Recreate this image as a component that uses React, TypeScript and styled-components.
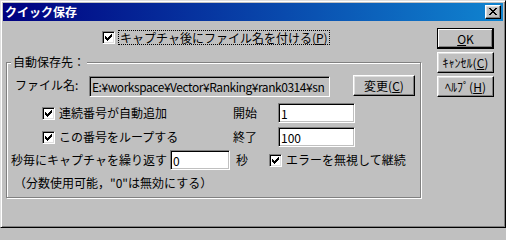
import React from 'react';
import styled, { createGlobalStyle, css } from 'styled-components';

const GlobalStyle = createGlobalStyle`
  html, body {
    margin: 0;
    padding: 0;
    background: #c0c0c0;
  }
  body {
    font-family: "Noto Sans CJK JP", "Noto Sans", sans-serif;
    font-size: 12px;
    color: #000;
  }
`;

const CheckMark = () => (
  <svg width="7" height="7" viewBox="0 0 7 7" shapeRendering="crispEdges">
    <path
      fill="#000"
      d="M6 0h1v1h-1z M5 1h2v1h-2z M0 2h1v1h-1z M4 2h3v1h-3z M0 3h2v1h-2z M3 3h3v1h-3z M0 4h5v1h-5z M1 5h3v1h-3z M2 6h1v1h-1z"
    />
  </svg>
);

const CloseGlyph = () => (
  <svg width="8" height="7" viewBox="0 0 8 7" shapeRendering="crispEdges">
    <path
      fill="#000"
      d="M0 0h2v1h-2z M6 0h2v1h-2z M1 1h2v1h-2z M5 1h2v1h-2z M2 2h4v1h-4z M3 3h2v1h-2z M2 4h4v1h-4z M1 5h2v1h-2z M5 5h2v1h-2z M0 6h2v1h-2z M6 6h2v1h-2z"
    />
  </svg>
);

const Check = ({ label }: { label: React.ReactNode }) => (
  <CheckCell>
    <CheckBox>
      <CheckMark />
    </CheckBox>
    <CheckText>{label}</CheckText>
  </CheckCell>
);

const App = () => {
  return (
    <>
      <GlobalStyle />
      <Window>
        <TitleBar>
          <Title>クイック保存</Title>
          <CloseButton aria-label="閉じる">
            <CloseGlyph />
          </CloseButton>
        </TitleBar>
        <Body>
          <LeftPane>
            <TopCheckRow>
              <CheckBox>
                <CheckMark />
              </CheckBox>
              <FocusLabel>
                キャプチャ後にファイル名を付ける(<u>P</u>)
              </FocusLabel>
            </TopCheckRow>

            <GroupBox>
              <GroupLegend>自動保存先：</GroupLegend>

              <FileRow>
                <RowLabel $indent={8} $width={74}>ファイル名:</RowLabel>
                <TextField
                  $width={241}
                  $height={21}
                  $readonly
                  readOnly
                  value="E:¥workspace¥Vector¥Ranking¥rank0314¥sn"
                />
                <Button $width={62} $gap={23}>
                  変更(<u>C</u>)
                </Button>
              </FileRow>

              <NumberRow $top={6}>
                <CheckColumn>
                  <Check label="連続番号が自動追加" />
                </CheckColumn>
                <RowLabel $width={45}>開始</RowLabel>
                <TextField $width={77} readOnly value="1" />
              </NumberRow>

              <NumberRow $top={4}>
                <CheckColumn>
                  <Check label="この番号をループする" />
                </CheckColumn>
                <RowLabel $width={45}>終了</RowLabel>
                <TextField $width={77} readOnly value="100" />
              </NumberRow>

              <NumberRow $top={3}>
                <RowLabel $indent={4} $width={159}>
                  秒毎にキャプチャを繰り返す
                </RowLabel>
                <TextField $width={60} readOnly value="0" />
                <RowLabel $indent={6} $width={33}>
                  秒
                </RowLabel>
                <Check label="エラーを無視して継続" />
              </NumberRow>

              <NoteRow>（分数使用可能，"0"は無効にする）</NoteRow>
            </GroupBox>
          </LeftPane>

          <ButtonColumn>
            <Button $width={57} $default>
              <u>O</u>K
            </Button>
            <Button $width={57}>
              ｷｬﾝｾﾙ(<u>C</u>)
            </Button>
            <Button $width={57}>
              ﾍﾙﾌﾟ(<u>H</u>)
            </Button>
          </ButtonColumn>
        </Body>
      </Window>
    </>
  );
};

export default App;

const Window = styled.div`
  box-sizing: border-box;
  width: 506px;
  height: 228px;
  padding: 2px;
  background: #c0c0c0;
  border: 1px solid;
  border-color: #dfdfdf #000 #000 #dfdfdf;
  box-shadow: inset 1px 1px #fff, inset -1px -1px #808080;
  display: flex;
  flex-direction: column;
`;

const TitleBar = styled.div`
  flex: none;
  height: 18px;
  display: flex;
  align-items: center;
  padding: 0 2px;
  background: linear-gradient(to right, #000080, #1084d0);
`;

const Title = styled.span`
  color: #fff;
  font-weight: bold;
  font-size: 12px;
  line-height: 14px;
`;

const raised = css`
  border: 1px solid;
  border-color: #fff #000 #000 #fff;
  box-shadow: inset -1px -1px #808080, inset 1px 1px #dfdfdf;
`;

const CloseButton = styled.button`
  box-sizing: border-box;
  margin-left: auto;
  width: 16px;
  height: 14px;
  padding: 2px 0 0 3px;
  background: #c0c0c0;
  ${raised};
  display: flex;
  align-items: flex-start;

  svg {
    display: block;
  }
`;

const Body = styled.div`
  flex: 1;
  display: flex;
`;

const LeftPane = styled.div`
  flex: none;
  width: 434px;
  display: flex;
  flex-direction: column;
`;

const TopCheckRow = styled.div`
  margin: 9px 0 0 99px;
  height: 15px;
  display: flex;
  align-items: center;
`;

const FocusLabel = styled.span`
  margin-left: 3px;
  padding: 0 1px;
  border: 1px dotted #000;
  line-height: 13px;
  white-space: nowrap;
`;

const GroupBox = styled.div`
  position: relative;
  box-sizing: border-box;
  margin: 17px 0 0 3px;
  width: 415px;
  height: 136px;
  border: 1px solid #808080;
  box-shadow: inset 1px 1px #fff, 1px 1px #fff;
  display: flex;
  flex-direction: column;
`;

const GroupLegend = styled.span`
  position: absolute;
  top: -7px;
  left: 4px;
  padding: 0 2px;
  line-height: 12px;
  background: #c0c0c0;
`;

const FileRow = styled.div`
  margin-top: 12px;
  height: 22px;
  display: flex;
  align-items: flex-start;
`;

const NumberRow = styled.div<{ $top: number }>`
  margin-top: ${(p) => p.$top}px;
  height: 20px;
  display: flex;
  align-items: center;
`;

const RowLabel = styled.span<{ $indent?: number; $width: number }>`
  flex: none;
  margin-left: ${(p) => p.$indent ?? 0}px;
  width: ${(p) => p.$width}px;
  line-height: 20px;
  white-space: nowrap;
`;

const TextField = styled.input<{ $width: number; $height?: number; $readonly?: boolean }>`
  flex: none;
  box-sizing: border-box;
  width: ${(p) => p.$width}px;
  height: ${(p) => p.$height ?? 20}px;
  margin: ${(p) => (p.$height ? '1px 0 0' : '0')};
  padding: 0 0 0 2px;
  font: inherit;
  font-size: 12px;
  letter-spacing: ${(p) => (p.$readonly ? '-0.45px' : '0')};
  color: #000;
  background: ${(p) => (p.$readonly ? '#c0c0c0' : '#fff')};
  border: 1px solid;
  border-color: #808080 #fff #fff #808080;
  box-shadow: inset 1px 1px #000, inset -1px -1px #c0c0c0;
  outline: none;
`;

const Button = styled.button<{ $width: number; $gap?: number; $default?: boolean }>`
  flex: none;
  box-sizing: border-box;
  width: ${(p) => p.$width}px;
  height: 21px;
  margin-left: ${(p) => p.$gap ?? 0}px;
  padding: 0;
  font: inherit;
  font-size: 12px;
  line-height: 12px;
  color: #000;
  background: #c0c0c0;
  white-space: nowrap;
  ${raised};

  ${(p) =>
    p.$default &&
    css`
      border-color: #000;
      box-shadow: inset -1px -1px #000, inset 1px 1px #fff, inset -2px -2px #808080;
    `}
`;

const ButtonColumn = styled.div`
  flex: none;
  width: 57px;
  margin-top: 7px;
  display: flex;
  flex-direction: column;
  gap: 3px;
`;

const CheckColumn = styled.div`
  flex: none;
  margin-left: 35px;
  width: 191px;
  display: flex;
`;

const CheckCell = styled.span`
  display: inline-flex;
  align-items: center;
  white-space: nowrap;
`;

const CheckBox = styled.span`
  flex: none;
  box-sizing: border-box;
  width: 13px;
  height: 13px;
  background: #fff;
  border: 1px solid;
  border-color: #808080 #fff #fff #808080;
  box-shadow: inset 1px 1px #000, inset -1px -1px #dfdfdf;
  display: flex;
  align-items: center;
  justify-content: center;

  svg {
    display: block;
  }
`;

const CheckText = styled.span`
  margin-left: 4px;
  line-height: 14px;
`;

const NoteRow = styled.div`
  margin: 6px 0 0 7px;
  line-height: 14px;
  white-space: nowrap;
`;
